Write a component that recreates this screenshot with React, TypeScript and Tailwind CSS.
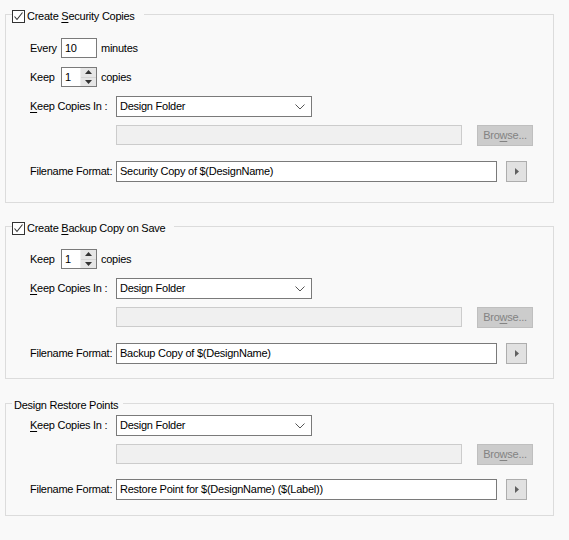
import React from 'react';

const textStyle = "font-['Liberation_Sans',Arial,sans-serif] text-[11px] tracking-[-0.25px] text-black";

const U: React.FC<{ children: React.ReactNode }> = ({ children }) => <span className="underline underline-offset-[2px]">{children}</span>;

const CheckBox: React.FC = () => (
    <div className="w-[13px] h-[13px] border border-[#333333] bg-white flex items-center justify-center shrink-0">
        <svg width="11" height="11" viewBox="0 0 11 11">
            <path d="M1.5 5.5 L4 8.5 L9.5 1.5" fill="none" stroke="#333333" strokeWidth="1.1" />
        </svg>
    </div>
);

interface GroupProps {
    legend: React.ReactNode;
    checked?: boolean;
    className: string;
    children: React.ReactNode;
}

const GroupBox: React.FC<GroupProps> = ({ legend, checked, className, children }) => (
    <div className={`relative ml-[5px] w-[549px] border border-[#dcdcdc] pl-[24px] flex flex-col ${className}`}>
        <div className={`absolute left-[6px] top-[-6px] h-[14px] flex items-center bg-[#f9f9f9] ${checked ? 'pr-[9px]' : 'pl-[2px] pr-[5px]'}`}>
            {checked && <CheckBox />}
            <span className={checked ? 'ml-[2px]' : ''}>{legend}</span>
        </div>
        {children}
    </div>
);

const Label: React.FC<{ w: string; children: React.ReactNode }> = ({ w, children }) => (
    <span className={`${w} shrink-0`}>{children}</span>
);

const SpinBox: React.FC = () => (
    <div className="w-[36px] h-[20px] border border-[#7a7a7a] bg-white flex">
        <span className="flex-1 pl-[3px] leading-[18px]">1</span>
        <div className="w-[16px] flex flex-col border-l border-[#f0f0f0]">
            <div className="flex-1 bg-[#e6e6e6] border-b border-[#d4d4d4] flex items-center justify-center">
                <svg width="7" height="4" viewBox="0 0 7 4"><path d="M0 4 L3.5 0 L7 4 Z" fill="#333333" /></svg>
            </div>
            <div className="flex-1 bg-[#e6e6e6] flex items-center justify-center">
                <svg width="7" height="4" viewBox="0 0 7 4"><path d="M0 0 L3.5 4 L7 0 Z" fill="#333333" /></svg>
            </div>
        </div>
    </div>
);

const KeepRow: React.FC<{ className: string }> = ({ className }) => (
    <div className={`flex items-center h-[20px] ${className}`}>
        <Label w="w-[31px]">Keep</Label>
        <SpinBox />
        <span className="ml-[4px]">copies</span>
    </div>
);

const ComboRow: React.FC<{ className: string }> = ({ className }) => (
    <div className={`flex items-center h-[21px] ${className}`}>
        <Label w="w-[86px]"><U>K</U>eep Copies In :</Label>
        <div className="w-[196px] h-[21px] border border-[#7a7a7a] bg-white flex items-center pl-[3px] pr-[6px]">
            <span className="flex-1">Design Folder</span>
            <svg width="10" height="6" viewBox="0 0 10 6"><path d="M0.5 0.5 L5 5 L9.5 0.5" fill="none" stroke="#555555" strokeWidth="1" /></svg>
        </div>
    </div>
);

const PathRow: React.FC<{ className: string }> = ({ className }) => (
    <div className={`flex items-start h-[21px] ${className}`}>
        <div className="ml-[86px] w-[346px] h-[20px] border border-[#cccccc] bg-[#f0f0f0]" />
        <div className="ml-[15px] w-[56px] h-[21px] border border-[#bfbfbf] bg-[#cccccc] text-[#838383] flex items-center justify-center">
            <span>Bro<U>w</U>se...</span>
        </div>
    </div>
);

const FilenameRow: React.FC<{ value: string; className: string }> = ({ value, className }) => (
    <div className={`flex items-center h-[21px] ${className}`}>
        <Label w="w-[86px]">Filename Format:</Label>
        <div className="w-[381px] h-[21px] border border-[#7a7a7a] bg-white flex items-center pl-[3px]">
            <span>{value}</span>
        </div>
        <div className="ml-[9px] w-[21px] h-[21px] border border-[#adadad] bg-[#e1e1e1] flex items-center justify-center">
            <svg width="4" height="7" viewBox="0 0 4 7"><path d="M0 0 L4 3.5 L0 7 Z" fill="#606060" /></svg>
        </div>
    </div>
);

const App: React.FC = () => {
    return (
        <div className={`w-[569px] h-[540px] bg-[#f9f9f9] pt-[14px] overflow-hidden ${textStyle}`}>
            <GroupBox checked legend={<>Create <U>S</U>ecurity Copies</>} className="h-[189px] pt-[23px]">
                <div className="flex items-center h-[20px]">
                    <Label w="w-[31px]">Every</Label>
                    <div className="w-[36px] h-[20px] border border-[#7a7a7a] bg-white pl-[3px] leading-[18px]">10</div>
                    <span className="ml-[4px]">minutes</span>
                </div>
                <KeepRow className="mt-[9px]" />
                <ComboRow className="mt-[9px]" />
                <PathRow className="mt-[8px]" />
                <FilenameRow className="mt-[15px]" value="Security Copy of $(DesignName)" />
            </GroupBox>

            <GroupBox checked legend={<>Create <U>B</U>ackup Copy on Save</>} className="mt-[23px] h-[153px] pt-[22px]">
                <KeepRow className="" />
                <ComboRow className="mt-[9px]" />
                <PathRow className="mt-[8px]" />
                <FilenameRow className="mt-[15px]" value="Backup Copy of $(DesignName)" />
            </GroupBox>

            <GroupBox legend="Design Restore Points" className="mt-[24px] h-[113px] pt-[11px]">
                <ComboRow className="" />
                <PathRow className="mt-[8px]" />
                <FilenameRow className="mt-[14px]" value="Restore Point for $(DesignName) ($(Label))" />
            </GroupBox>
        </div>
    );
};

export default App;
